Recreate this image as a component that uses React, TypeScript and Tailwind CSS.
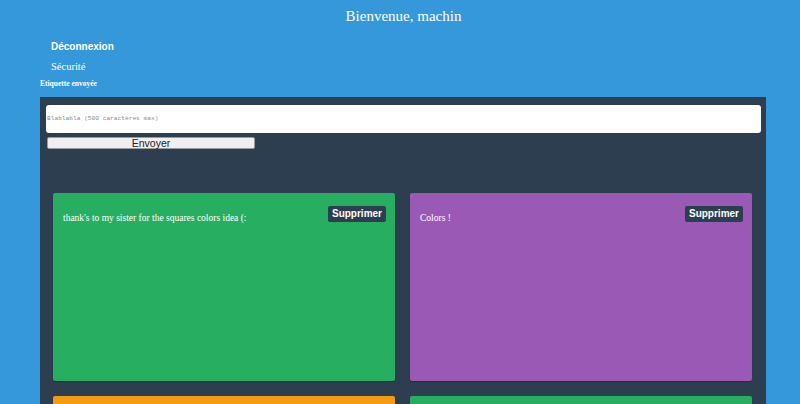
import { useState } from 'react'

type Note = { id: number; text: string; color: string }

const notes: Note[] = [
  { id: 1, text: "thank's to my sister for the squares colors idea (:", color: 'bg-[#27ae60]' },
  { id: 2, text: 'Colors !', color: 'bg-[#9b59b6]' },
  { id: 3, text: 'Hello', color: 'bg-[#f39c12]' },
  { id: 4, text: 'Test', color: 'bg-[#27ae60]' },
]

export default function App() {
  const [text, setText] = useState('')

  return (
    <div className="min-h-screen bg-[#3498db]">
      <div className="pb-[40px] text-white font-['Liberation_Serif',serif]">
        {/* en-tête */}
        <h1 className="h-[33px] pl-[7px] text-center text-[15px] leading-[33px] font-normal">Bienvenue, machin</h1>
        <div className="mt-[4px] pl-[51px]">
          <div className="text-[10px] leading-[20px] font-bold font-['Liberation_Sans',Arial,sans-serif]">Déconnexion</div>
          <div className="text-[10.5px] leading-[20px]">Sécurité</div>
        </div>
        <div className="pl-[40px] text-[7.5px] leading-[14px] font-bold">Etiquette envoyée</div>

        {/* panneau */}
        <div className="mt-[6px] ml-[40px] w-[726px] bg-[#2c3e50] pt-[8px] pl-[6px] pr-[5px] pb-[20px]">
          <textarea
            value={text}
            onChange={(e) => setText(e.target.value)}
            placeholder="Blablabla (500 caractères max)"
            className="block h-[28px] w-full resize-none rounded-[3px] bg-white pt-[9px] pl-[1px] text-[6.2px] text-black placeholder:text-[#8a8a8a] font-['Liberation_Mono',monospace] outline-none"
          />
          <button className="mt-[4px] ml-[1px] block h-[12px] w-[208px] rounded-[2px] border border-[#9a9a9a] bg-[#efefef] text-[10.5px] leading-[10px] text-[#222] font-['Liberation_Sans',Arial,sans-serif]">
            Envoyer
          </button>

          <div className="mt-[44px] ml-[7px] grid w-[699px] grid-cols-2 gap-[15px]">
            {notes.map((n) => (
              <div key={n.id} className={`${n.color} h-[188px] rounded-[2px] shadow-[0_1px_1px_rgba(0,0,0,0.25)] pl-[10px] pr-[9px] pt-[13px]`}>
                <div className="flex items-start justify-between">
                  <p className="mt-[7px] text-[9.5px] leading-[10px]">{n.text}</p>
                  <button className="h-[16px] rounded-[2px] bg-[#2c3e50] px-[4px] text-[10px] font-bold leading-[16px] text-white font-['Liberation_Sans',Arial,sans-serif]">
                    Supprimer
                  </button>
                </div>
              </div>
            ))}
          </div>
        </div>
      </div>
    </div>
  )
}
